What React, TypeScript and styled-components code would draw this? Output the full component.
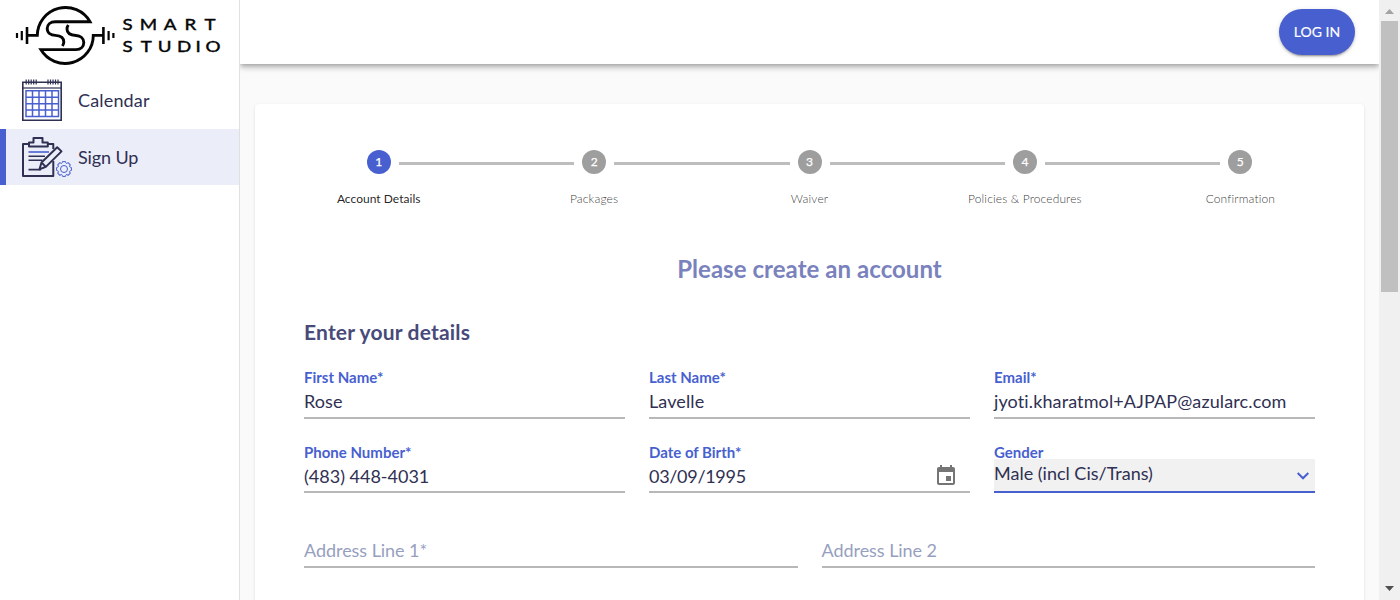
import React from 'react';
import styled, { createGlobalStyle } from 'styled-components';

const blue = '#485fd0';
const ink = '#2f3052';

const GlobalStyle = createGlobalStyle`
  * { box-sizing: border-box; }
  body {
    margin: 0;
    overflow: hidden;
    font-family: Lato, sans-serif;
    font-variant-ligatures: none;
  }
`;

const Page = styled.div`
  display: flex;
  height: 600px;
  overflow: hidden;
  background: #fafafa;
`;

const Sidebar = styled.aside`
  flex: 0 0 240px;
  background: #fff;
  border-right: 1px solid #e0e0e0;
`;

const LogoBox = styled.div`
  height: 73px;
  svg { display: block; }
`;

const NavItem = styled.a<{ $active?: boolean }>`
  display: flex;
  align-items: center;
  height: 56px;
  padding-left: 16px;
  padding-bottom: ${p => (p.$active ? 0 : 2)}px;
  border-left: 6px solid ${p => (p.$active ? blue : 'transparent')};
  background: ${p => (p.$active ? '#ebedf9' : 'transparent')};
  color: ${ink};
  font-size: 18px;
  letter-spacing: ${p => (p.$active ? -0.12 : 0.17)}px;
  svg { flex: 0 0 56px; display: block; }
`;

const Main = styled.main`
  flex: 1;
  min-width: 0;
  display: flex;
  flex-direction: column;
`;

const Header = styled.header`
  flex: 0 0 64px;
  display: flex;
  justify-content: flex-end;
  padding: 9px 24px 9px 0;
  background: #fff;
  box-shadow: 0 2px 4px -1px rgba(0,0,0,.2), 0 4px 5px 0 rgba(0,0,0,.14), 0 1px 10px 0 rgba(0,0,0,.12);
  clip-path: inset(0 0 -16px 0);
`;

const LoginButton = styled.button`
  width: 76px;
  height: 46px;
  padding: 0 0 2px;
  border: 0;
  border-radius: 25px;
  background: ${blue};
  color: #fff;
  font: 400 14px Lato, sans-serif;
  -webkit-text-stroke: 0.15px #fff;
  box-shadow: 0 3px 1px -2px rgba(0,0,0,.2), 0 2px 2px 0 rgba(0,0,0,.14), 0 1px 5px 0 rgba(0,0,0,.12);
`;

const Card = styled.section`
  flex: 0 0 700px;
  margin: 40px 15px 0;
  background: #fff;
  border-radius: 4px;
  box-shadow: 0 1px 3px rgba(0,0,0,.12);
`;

const Stepper = styled.ol`
  display: flex;
  list-style: none;
  margin: 0;
  padding: 46px 16px 0;
`;

const Step = styled.li`
  flex: 1;
  display: flex;
  flex-direction: column;
  align-items: center;
`;

const StepTrack = styled.div`
  width: 100%;
  display: flex;
  align-items: center;
  justify-content: space-between;
`;

const Connector = styled.span<{ $hidden?: boolean }>`
  flex: 1;
  height: 3px;
  margin-top: 3px;
  background: ${p => (p.$hidden ? 'transparent' : '#bdbdbd')};
`;

const StepDot = styled.span<{ $active?: boolean }>`
  width: 24px;
  height: 24px;
  margin: 0 8px;
  border-radius: 50%;
  background: ${p => (p.$active ? blue : '#9e9e9e')};
  color: #fff;
  font-size: 12px;
  line-height: 24px;
  text-align: center;
  -webkit-text-stroke: 0.25px #fff;
`;

const StepLabel = styled.span<{ $active?: boolean }>`
  margin-top: 16px;
  font-size: 12px;
  line-height: 18px;
  font-weight: ${p => (p.$active ? 400 : 300)};
  letter-spacing: ${p => (p.$active ? 0.03 : 0.14)}px;
  color: ${p => (p.$active ? 'rgba(0,0,0,.87)' : 'rgba(0,0,0,.8)')};
`;

const Title = styled.h1`
  margin: 46px 0 0;
  text-align: center;
  font-size: 24px;
  line-height: 30px;
  font-weight: 700;
  letter-spacing: 0.05px;
  color: #7a82bd;
`;

const Form = styled.form`
  padding: 34px 49px 0;
`;

const SectionTitle = styled.h2`
  margin: 0;
  font-size: 21px;
  line-height: 28px;
  font-weight: 700;
  letter-spacing: 0.18px;
  color: #484a7a;
`;

const Row = styled.div<{ $cols: number; $top: number }>`
  display: grid;
  grid-template-columns: repeat(${p => p.$cols}, 1fr);
  column-gap: 24px;
  margin-top: ${p => p.$top}px;
`;

const Field = styled.div`
  display: flex;
  flex-direction: column;
`;

const Label = styled.label`
  height: 17px;
  font-size: 15px;
  line-height: 18px;
  font-weight: 700;
  color: ${blue};
`;

const Control = styled.div<{ $select?: boolean; $lift?: number; $spacing?: number }>`
  display: flex;
  align-items: center;
  justify-content: space-between;
  height: ${p => (p.$select ? 34 : 33)}px;
  margin-top: ${p => (p.$select ? -1 : 0)}px;
  padding-bottom: ${p => p.$lift ?? 0}px;
  border-bottom: 2px solid ${p => (p.$select ? blue : '#b8b8b8')};
  background: ${p => (p.$select ? '#f1f1f1' : 'transparent')};
  color: ${ink};
  font-size: 18px;
  line-height: 22px;
  letter-spacing: ${p => p.$spacing ?? 0}px;
`;

const TallRow = styled(Row)`
  ${Label} { height: 18px; line-height: 18px; }
`;

const Placeholder = styled.span`
  color: #979fc0;
`;

const DateIcon = styled.svg`
  margin-right: 12px;
`;

const Chevron = styled.svg`
  margin: 7px 5px 0 0;
`;

const Scrollbar = styled.div`
  flex: 0 0 21px;
  display: flex;
  flex-direction: column;
  align-items: center;
  background: #f0f0f0;
  svg { display: block; }
`;

const Thumb = styled.div`
  width: 17px;
  height: 271px;
  margin-bottom: auto;
  background: #c0c0c0;
`;

const Logo = () => (
  <svg width="239" height="70" viewBox="0 0 239 70" fill="none" stroke="#050505">
    <path d="M17 33V38M21.8 31V40.3" strokeWidth="2.2" />
    <path d="M27 27V44" strokeWidth="2.6" />
    <path d="M27 35.4H37.3A28.2 28.2 0 0 1 90 21.7H55.5C50 21.7 47.2 25 47.2 28.5C47.2 33 51 35.2 55.5 35.4C61 35.7 63.8 38.3 63.8 42C63.8 43.6 63.2 44.9 62.4 46" strokeWidth="2.9" />
    <path d="M103 35.4H93.3A28.2 28.2 0 0 1 40.8 49.6H76C81 49.6 83.8 46.3 83.8 42.6C83.8 38.4 80.5 35.7 76 35.5C70 35.2 67 32.4 67 29C67 27.4 67.5 26.2 68.3 25" strokeWidth="2.9" />
    <path d="M103.4 27V44" strokeWidth="2.6" />
    <path d="M108.6 31V40.3M113.4 33V38" strokeWidth="2.2" />
    <g fill="#050505" stroke="#050505" strokeWidth=".4" fontFamily="Lato, sans-serif" fontSize="14.4">
      <text transform="translate(0 29.5) scale(1.3 1)" x="94.3 107.5 126 142 157.4">SMART</text>
      <text transform="translate(0 52) scale(1.3 1)" x="94.3 108.2 121.4 136.2 150.3 158">STUDIO</text>
    </g>
  </svg>
);

const CalendarIcon = () => (
  <svg width="56" height="46" viewBox="0 0 56 46" fill="none">
    <path d="M.8 5.2H39.2V43.3H.8Z" stroke={ink} strokeWidth="1.6" />
    <path d="M1 11H39" stroke={ink} strokeWidth="1.6" opacity=".8" />
    <path d="M4.2 2.5v5M6.7 2.5v5M9.2 2.5v5M11.7 2.5v5M14.2 2.5v5M26 2.5v5M28.5 2.5v5M31 2.5v5M33.5 2.5v5M36 2.5v5" stroke={ink} strokeWidth="1.2" />
    <path d="M4 13.7H36.5V39.5H4ZM10.5 14V39.5M17 14V39.5M23.5 14V39.5M30 14V39.5M4 20.3H36.5M4 26.7H36.5M4 33H36.5" stroke={blue} strokeWidth="1.5" />
  </svg>
);

const teeth = Array.from({ length: 8 }, (_, i) => i * 45);

const SignUpIcon = () => (
  <svg width="56" height="46" viewBox="0 0 56 46" fill="none">
    <g stroke={ink} strokeWidth="2" strokeLinejoin="round">
      <path d="M7 10H1V42H31.3V27M31.3 15V10H25.5" />
      <path d="M7 12.5V8.5H11.5V4H20.5V8.5H25.8V12.5Z" />
      <path d="M6.5 22.2H23M6.5 26.2H20.5M6.5 35.6H19" strokeWidth="1.6" />
      <path d="M17.5 35.3L19.5 28.5L35.2 13.3L39.5 17.4L23.8 32.9ZM19.5 28.5L23.8 32.9" fill="#ebedf9" />
    </g>
    <path d="M6.5 18H27" stroke={blue} strokeWidth="1.6" />
    <g stroke={blue} strokeWidth="1" strokeLinejoin="round" transform="translate(42 35)">
      <circle r="3.5" />
      {teeth.map(a => (
        <path key={a} transform={`rotate(${a})`} d="M-2.3 -5.6Q-1.7 -6 -1.5 -7.4H1.5Q1.7 -6 2.3 -5.6" />
      ))}
    </g>
  </svg>
);

const steps = ['Account Details', 'Packages', 'Waiver', 'Policies & Procedures', 'Confirmation'];

export default function App() {
  return (
    <Page>
      <GlobalStyle />
      <Sidebar>
        <LogoBox><Logo /></LogoBox>
        <NavItem><CalendarIcon />Calendar</NavItem>
        <NavItem $active><SignUpIcon />Sign Up</NavItem>
      </Sidebar>
      <Main>
        <Header><LoginButton>LOG IN</LoginButton></Header>
        <Card>
          <Stepper>
            {steps.map((s, i) => (
              <Step key={s}>
                <StepTrack>
                  <Connector $hidden={i === 0} />
                  <StepDot $active={i === 0}>{i + 1}</StepDot>
                  <Connector $hidden={i === steps.length - 1} />
                </StepTrack>
                <StepLabel $active={i === 0}>{s}</StepLabel>
              </Step>
            ))}
          </Stepper>
          <Title>Please create an account</Title>
          <Form>
            <SectionTitle>Enter your details</SectionTitle>
            <TallRow $cols={3} $top={22}>
              <Field><Label>First Name*</Label><Control $lift={2} $spacing={0.1}>Rose</Control></Field>
              <Field><Label>Last Name*</Label><Control $lift={2} $spacing={0.1}>Lavelle</Control></Field>
              <Field><Label>Email*</Label><Control $lift={2} $spacing={0.12}>jyoti.kharatmol+AJPAP@azularc.com</Control></Field>
            </TallRow>
            <Row $cols={3} $top={24}>
              <Field><Label>Phone Number*</Label><Control>(483) 448-4031</Control></Field>
              <Field>
                <Label>Date of Birth*</Label>
                <Control $spacing={-0.3}>
                  03/09/1995
                  <DateIcon width="24" height="24" viewBox="0 0 24 24" fill="#757575">
                    <path d="M17 12h-5v5h5v-5zM16 1v2H8V1H6v2H5c-1.11 0-1.99.9-1.99 2L3 19c0 1.1.89 2 2 2h14c1.1 0 2-.9 2-2V5c0-1.1-.9-2-2-2h-1V1h-2zm3 18H5V8h14v11z" />
                  </DateIcon>
                </Control>
              </Field>
              <Field>
                <Label>Gender</Label>
                <Control $select $lift={5}>
                  Male (incl Cis/Trans)
                  <Chevron width="14" height="10" viewBox="0 0 14 10" fill="none" stroke={blue} strokeWidth="2">
                    <path d="M1.7 2L7 7.3L12.3 2" />
                  </Chevron>
                </Control>
              </Field>
            </Row>
            <Row $cols={2} $top={42}>
              <Control $lift={2} $spacing={-0.05}><Placeholder>Address Line 1*</Placeholder></Control>
              <Control $lift={2} $spacing={-0.05}><Placeholder>Address Line 2</Placeholder></Control>
            </Row>
          </Form>
        </Card>
      </Main>
      <Scrollbar>
        <svg width="17" height="21" viewBox="0 0 17 21"><path d="M4 14L8.5 9L13 14Z" fill="#a3a3a3" /></svg>
        <Thumb />
        <svg width="17" height="17" viewBox="0 0 17 17"><path d="M4 3H13L8.5 8Z" fill="#505050" /></svg>
      </Scrollbar>
    </Page>
  );
}
